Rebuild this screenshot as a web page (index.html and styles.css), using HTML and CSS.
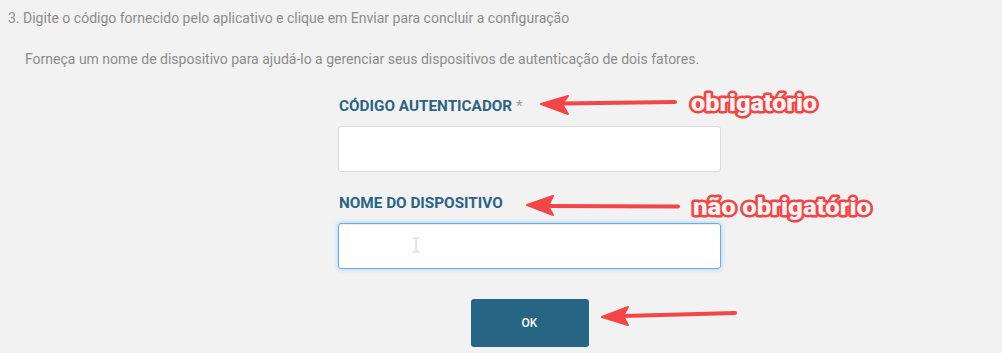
FILE: index.html
```html
<!DOCTYPE html>
<html lang="pt">
<head>
<meta charset="utf-8">
<title>Autenticação de dois fatores</title>
<link rel="stylesheet" href="styles.css">
</head>
<body>
<div class="page">
  <p class="step">3. Digite o código fornecido pelo aplicativo e clique em Enviar para concluir a configuração</p>
  <p class="hint">Forneça um nome de dispositivo para ajudá-lo a gerenciar seus dispositivos de autenticação de dois fatores.</p>
  <form class="form">
    <label class="label" for="code">CÓDIGO AUTENTICADOR <span class="req">*</span></label>
    <input class="input" id="code" type="text">
    <label class="label label-2" for="name">NOME DO DISPOSITIVO</label>
    <div class="field-wrap">
      <input class="input input-focus" id="name" type="text">
      <svg class="ibeam" width="8" height="16" viewBox="0 0 8 16"><path d="M1 1h2.5M4.5 1H7M4 1.5v13M1 15h2.5M4.5 15H7" stroke="#c8c8c8" stroke-width="1" fill="none"/></svg>
    </div>
    <button class="btn" type="button">OK</button>
  </form>
  <svg class="notes" width="1002" height="353" viewBox="0 0 1002 353">
    <g fill="#f34646" stroke="#f34646" stroke-linecap="round" stroke-linejoin="round">
      <line x1="562" y1="103.5" x2="675" y2="102" stroke-width="4"/>
      <path d="M541 104 L568 96 L562 104 L568 114 Z" stroke-width="2"/>
      <line x1="548" y1="206" x2="678" y2="206.5" stroke-width="4"/>
      <path d="M527 205 L553 196 L548 206 L553 215 Z" stroke-width="2"/>
      <line x1="623" y1="316" x2="735" y2="313" stroke-width="4"/>
      <path d="M602 317 L628 307 L623 316 L628 325 Z" stroke-width="2"/>
    </g>
    <g class="note-text">
      <text x="691" y="111" textLength="126" lengthAdjust="spacingAndGlyphs">obrigatório</text>
      <text x="693" y="215" textLength="178" lengthAdjust="spacingAndGlyphs">não obrigatório</text>
    </g>
  </svg>
</div>
</body>
</html>
```
FILE: styles.css
```css
html, body {
  margin: 0;
  padding: 0;
  background: #f2f2f2;
}
body {
  font-family: Roboto, "Liberation Sans", Arial, sans-serif;
  width: 1002px;
  height: 353px;
  overflow: hidden;
}
.page {
  position: relative;
  width: 1002px;
  height: 353px;
  padding: 9px 0 0 8px;
  box-sizing: border-box;
}
.step, .hint {
  margin: 0;
  font-size: 14px;
  line-height: 18px;
  color: #8c8c8c;
}
.hint {
  margin-top: 23px;
  padding-left: 17px;
}
.form {
  display: flex;
  flex-direction: column;
  width: 383px;
  margin: 28px 0 0 330px;
}
.label {
  font-size: 15.3px;
  font-weight: 700;
  line-height: 20px;
  color: #2a6485;
  padding-left: 1px;
  margin-bottom: 10px;
}
.req {
  color: #a0a0a0;
  font-weight: 400;
}
.label-2 {
  margin-top: 21px;
}
.input {
  display: block;
  box-sizing: border-box;
  width: 383px;
  height: 46px;
  margin: 0;
  border: 1px solid #dcdcdc;
  border-radius: 3px;
  background: #fff;
  outline: none;
  padding: 0 12px;
  font: inherit;
}
.field-wrap {
  position: relative;
}
.input-focus {
  border-color: #66afe9;
  box-shadow: inset 0 1px 1px rgba(0,0,0,.075), 0 0 5px rgba(102,175,233,.55);
}
.ibeam {
  position: absolute;
  left: 74px;
  top: 14px;
}
.btn {
  align-self: center;
  width: 118px;
  height: 48px;
  margin-top: 30px;
  border: none;
  border-radius: 3px;
  background: #266584;
  color: #fff;
  font-family: Roboto, "Liberation Sans", Arial, sans-serif;
  font-size: 12px;
  font-weight: 500;
}
.notes {
  position: absolute;
  left: 0;
  top: 0;
  pointer-events: none;
}
.note-text text {
  font-family: Roboto, "Liberation Sans", Arial, sans-serif;
  font-weight: 900;
  font-size: 24px;
  fill: #fff4f4;
  stroke: #f24545;
  stroke-width: 5px;
  stroke-linejoin: round;
  paint-order: stroke fill;
}
```
